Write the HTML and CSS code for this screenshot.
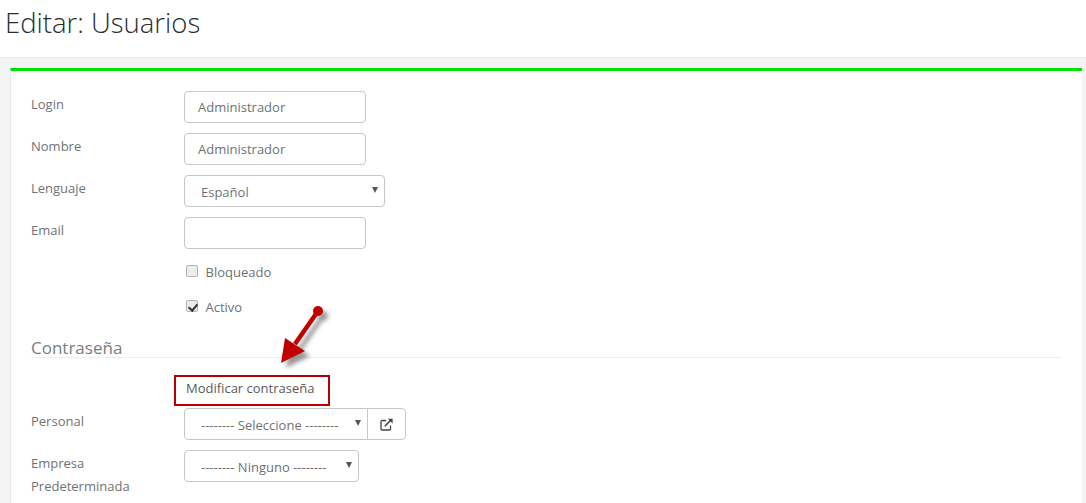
FILE: index.html
```html
<!DOCTYPE html>
<html>

<head>
    <title>Editar: Usuarios</title>
    <link rel="stylesheet" href="styles.css">
</head>

<body>
    <div class="page-heading">
        <h1>Editar: Usuarios</h1>
    </div>

    <div class="wrapper">
        <div class="box">
            <form>
                <div class="form-group">
                    <label>Login</label>
                    <input type="text" class="form-control" value="Administrador">
                </div>
                <div class="form-group">
                    <label>Nombre</label>
                    <input type="text" class="form-control" value="Administrador">
                </div>
                <div class="form-group">
                    <label>Lenguaje</label>
                    <div class="select-wrap lang">
                        <select>
                            <option>Español</option>
                        </select>
                    </div>
                </div>
                <div class="form-group">
                    <label>Email</label>
                    <input type="text" class="form-control">
                </div>

                <div class="check-row first">
                    <input type="checkbox" id="bloqueado">
                    <label for="bloqueado">Bloqueado</label>
                </div>
                <div class="check-row">
                    <input type="checkbox" id="activo" checked>
                    <label for="activo">Activo</label>
                </div>

                <h3 class="section-title"><span>Contraseña</span></h3>

                <div class="link-row">
                    <a href="#" class="change-link">Modificar contraseña</a>
                </div>

                <div class="form-group">
                    <label>Personal</label>
                    <div class="input-group">
                        <div class="select-wrap personal">
                            <select>
                                <option>-------- Seleccione --------</option>
                            </select>
                        </div>
                        <button type="button" class="addon">
                            <svg width="13" height="13" viewBox="0 0 13 13" fill="none" stroke="#444" stroke-width="1.3">
                                <path d="M6 2.5H2.2Q1 2.5 1 3.7V10.8Q1 12 2.2 12H9.3Q10.5 12 10.5 10.8V7.5" />
                                <path d="M4.8 8.2L11 2" stroke-width="1.6" />
                                <path d="M7.8 0.7H12.6V5.5Z" fill="#444" stroke="none" />
                            </svg>
                        </button>
                    </div>
                </div>
                <div class="form-group">
                    <label class="narrow">Empresa Predeterminada</label>
                    <div class="select-wrap company">
                        <select>
                            <option>-------- Ninguno --------</option>
                        </select>
                    </div>
                </div>
            </form>

            <!-- annotation arrow over the form -->
            <svg class="arrow" width="70" height="70" viewBox="0 0 70 70">
                <defs>
                    <filter id="blur" x="-30%" y="-30%" width="160%" height="160%">
                        <feGaussianBlur stdDeviation="2" />
                    </filter>
                </defs>
                <g fill="#555" stroke="#555" opacity="0.6" filter="url(#blur)" transform="translate(5 5)">
                    <path d="M44 7L21 40" stroke-width="4.5" fill="none" />
                    <circle cx="44" cy="7" r="5" stroke="none" />
                    <path d="M7 59L11 34L31 47Z" stroke="none" />
                </g>
                <g fill="#c00000" stroke="#c00000">
                    <path d="M44 7L21 40" stroke-width="4.5" fill="none" />
                    <circle cx="44" cy="7" r="5" stroke="none" />
                    <path d="M7 59L11 34L31 47Z" stroke="none" />
                </g>
            </svg>
        </div>
    </div>
</body>

</html>
```

FILE: styles.css
```css
* {
    margin: 0;
    padding: 0;
    box-sizing: border-box;
}

html,
body {
    height: 503px;
    overflow: hidden;
}

body {
    font-family: 'Open Sans', sans-serif;
    font-size: 13px;
    line-height: 23px;
    color: #6f7274;
    background-color: #f3f3f4;
}

.page-heading {
    height: 58px;
    background: #ffffff;
    border-bottom: 1px solid #e7eaec;
    padding: 5px 5px 0;
}

h1 {
    font-size: 27.5px;
    font-weight: 300;
    line-height: 36px;
    color: #2a2d2f;
}

.wrapper {
    padding: 10px 4px 0 10px;
}

.box {
    position: relative;
    height: 435px;
    background: #ffffff;
    border-top: 3px solid #00e000;
    border-left: 1px solid #e7eaec;
    padding: 20px 20px 0 20px;
}

.form-group {
    display: flex;
    margin-bottom: 10px;
}

.form-group > label {
    width: 153px;
    flex-shrink: 0;
    padding-top: 2px;
}

.form-group > label.narrow {
    width: 110px;
    margin-right: 43px;
}

.form-control {
    width: 182px;
    height: 32px;
    padding: 0 13px;
    border: 1px solid #c4c6c8;
    border-radius: 4px;
    background: #ffffff;
    color: #6f7274;
    font: 13px 'Open Sans', sans-serif;
}

.select-wrap {
    position: relative;
    height: 32px;
}

.select-wrap::after {
    content: '';
    position: absolute;
    right: 7px;
    top: 12px;
    border-left: 3px solid transparent;
    border-right: 3px solid transparent;
    border-top: 6px solid #555;
}

.select-wrap select {
    appearance: none;
    width: 100%;
    height: 32px;
    padding: 2px 16px 0;
    border: 1px solid #c4c6c8;
    border-radius: 4px;
    background: #ffffff;
    color: #6f7274;
    font: 13px 'Open Sans', sans-serif;
}

.lang {
    width: 201px;
}

.personal {
    width: 184px;
}

.personal select {
    border-radius: 4px 0 0 4px;
}

.company {
    width: 175px;
}

.input-group {
    display: flex;
}

.addon {
    width: 39px;
    height: 32px;
    margin-left: -1px;
    border: 1px solid #c4c6c8;
    border-radius: 0 4px 4px 0;
    background: #ffffff;
    display: flex;
    align-items: center;
    justify-content: center;
}

.check-row {
    display: flex;
    align-items: center;
    height: 23px;
    margin-left: 155px;
    margin-bottom: 12px;
}

.check-row.first {
    margin-top: 12px;
}

.check-row input {
    appearance: none;
    position: relative;
    width: 12px;
    height: 12px;
    margin-top: -4px;
    margin-right: 7.5px;
    border: 1px solid #b4b4b4;
    border-radius: 2px;
    background: #ececec;
}

/* check mark drawn from two borders */
.check-row input:checked::after {
    content: '';
    position: absolute;
    left: 3px;
    top: 1px;
    width: 4px;
    height: 7px;
    border-right: 2px solid #333;
    border-bottom: 2px solid #333;
    transform: rotate(40deg);
}

.section-title {
    margin-top: 5px;
    height: 27px;
    padding-top: 3px;
    border-bottom: 1px solid #eeeeee;
    font-size: 17px;
    font-weight: 400;
    line-height: 28px;
    color: #7a7d80;
}

.link-row {
    height: 33px;
    margin-top: 17px;
    margin-left: 143px;
}

.change-link {
    display: inline-block;
    width: 156px;
    height: 31px;
    padding: 0 10px;
    border: 2px solid #b80000;
    color: #5a5a5a;
    text-decoration: none;
    white-space: nowrap;
}

.arrow {
    position: absolute;
    left: 263px;
    top: 233px;
}
```
